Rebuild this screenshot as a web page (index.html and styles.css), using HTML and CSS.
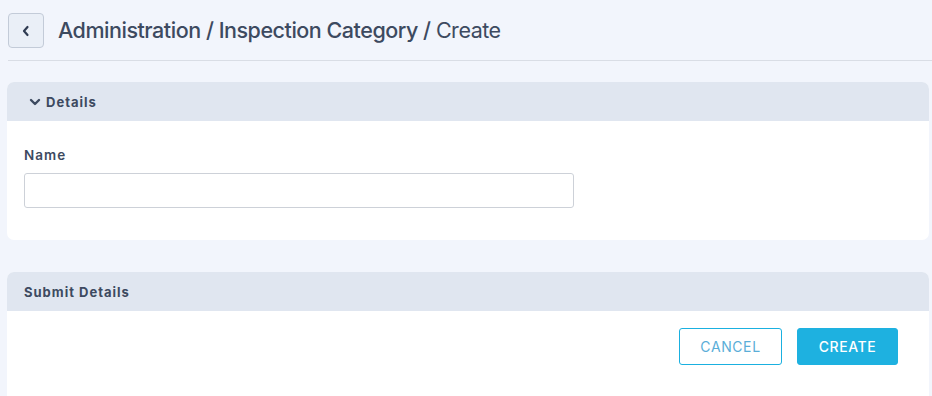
FILE: index.html
```html
<!DOCTYPE html>
<html>
<head>
<meta charset="utf-8">
<link rel="stylesheet" href="styles.css">
</head>
<body>
<div class="page">
  <header class="topbar">
    <button class="back" aria-label="Back">
      <svg width="10" height="12" viewBox="0 0 10 12"><path d="M6.5 2 L3 6 L6.5 10" fill="none" stroke="#2f3b52" stroke-width="2.2" stroke-linecap="round" stroke-linejoin="round"/></svg>
    </button>
    <h1 class="title"><span class="crumb">Administration</span> / <span class="crumb">Inspection Category</span> / <span class="current">Create</span></h1>
  </header>
  <div class="rule"></div>
  <section class="card">
    <div class="card-head details-head">
      <svg width="12" height="10" viewBox="0 0 12 10"><path d="M2 3 L6 7 L10 3" fill="none" stroke="#3d4a60" stroke-width="2.4" stroke-linecap="round" stroke-linejoin="round"/></svg>
      <span>Details</span>
    </div>
    <div class="card-body form-body">
      <label class="label" for="name">Name</label>
      <input id="name" class="input" type="text">
    </div>
  </section>
  <section class="card submit-card">
    <div class="card-head"><span>Submit Details</span></div>
    <div class="card-body actions">
      <button class="btn btn-outline">CANCEL</button>
      <button class="btn btn-primary">CREATE</button>
    </div>
  </section>
</div>
</body>
</html>
```
FILE: styles.css
```css
* { box-sizing: border-box; }
html, body { margin: 0; padding: 0; }
body {
  background: #f2f5fc;
  font-family: "Inter", "Open Sans", sans-serif;
  color: #3d4a60;
  height: 396px;
  overflow: hidden;
}
.page { padding: 0 3px 0 7px; }
.topbar {
  display: flex;
  align-items: center;
  height: 60px;
  padding-top: 1px;
  padding-left: 1px;
}
.back {
  width: 36px;
  height: 35px;
  border: 1px solid #c3cbd8;
  border-radius: 4px;
  background: #eaeff7;
  display: flex;
  align-items: center;
  justify-content: center;
  padding: 0;
  margin-right: 14px;
}
.title {
  margin: 0 0 2px;
  font-size: 21.5px;
  font-weight: 500;
  letter-spacing: -0.47px;
  color: #3d4a60;
}
.title .current { font-weight: 400; }
.rule {
  height: 1px;
  background: #d9dde5;
  margin-left: 1px;
  margin-right: -3px;
  margin-bottom: 21px;
}
.card {
  background: #fff;
  border-radius: 7px;
  overflow: hidden;
}
.card-head {
  background: #e0e6f0;
  height: 39px;
  display: flex;
  align-items: center;
  padding-left: 17px;
  font-size: 13px;
  font-weight: 700;
  letter-spacing: 1px;
  color: #3d4a60;
}
.details-head { padding-left: 22px; gap: 5px; }
.form-body {
  padding: 26px 17px 32px;
  display: flex;
  flex-direction: column;
}
.label {
  font-size: 13.5px;
  font-weight: 600;
  letter-spacing: 1px;
  color: #3d4a60;
  margin-bottom: 10px;
}
.input {
  width: 550px;
  height: 35px;
  border: 1px solid #cdd1d8;
  border-radius: 3px;
  background: #fff;
}
.submit-card { margin-top: 32px; height: 140px; }
.actions {
  display: flex;
  justify-content: flex-end;
  gap: 15px;
  padding: 17px 31px 0 0;
}
.btn {
  height: 37px;
  border-radius: 3px;
  font-family: inherit;
  font-size: 14px;
  letter-spacing: 0.6px;
}
.btn-outline {
  width: 103px;
  background: #fff;
  border: 1px solid #1ab0e0;
  color: #5aaed8;
}
.btn-primary {
  width: 101px;
  background: #1eb1e0;
  border: 1px solid #1eb1e0;
  color: #fff;
  font-weight: 500;
}
```
